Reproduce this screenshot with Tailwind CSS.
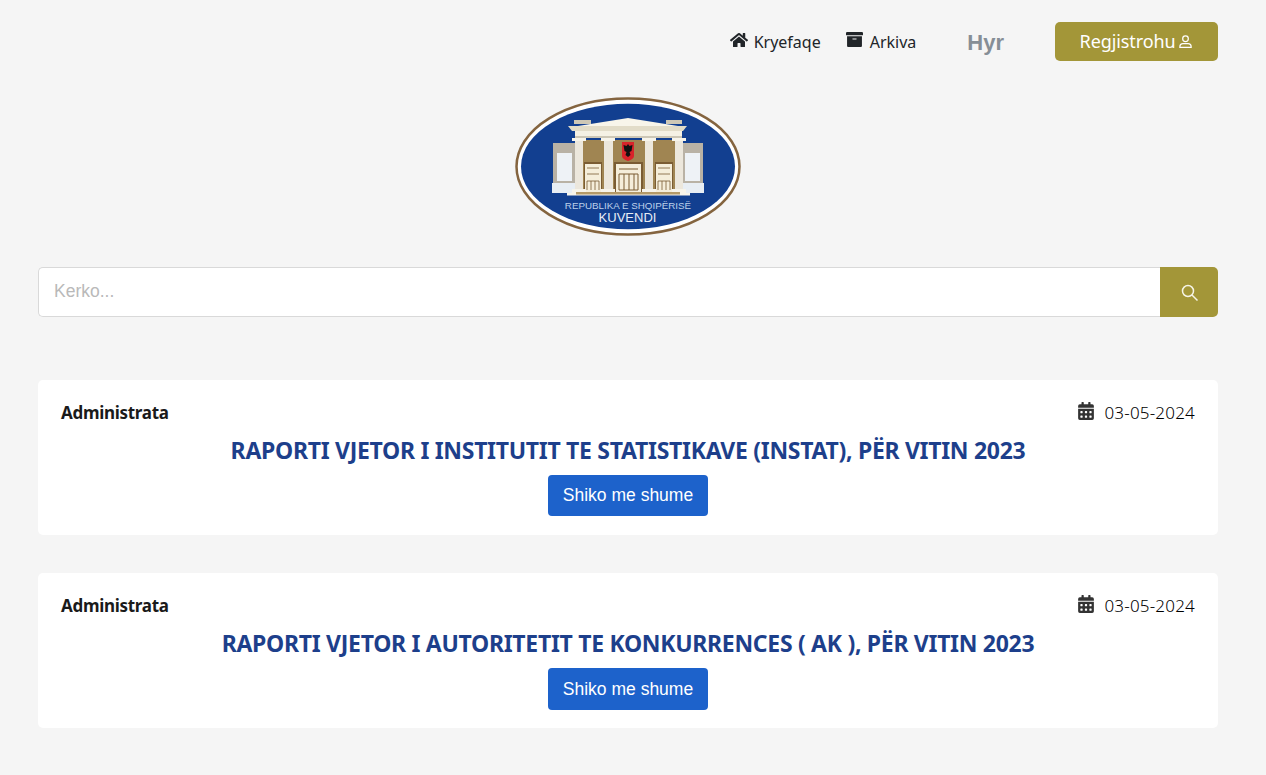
<!DOCTYPE html>
<html lang="en">
<head>
  <meta charset="UTF-8">
  <meta name="viewport" content="width=device-width, initial-scale=1.0">
  <title>Kuvendi</title>
  <script src="https://cdn.jsdelivr.net/npm/@tailwindcss/browser@4"></script>
</head>
<body class="bg-[#f5f5f5] min-h-screen font-['Noto_Sans',sans-serif] text-[#212529]">
  <div class="pl-[38px] pr-[48px]">
    <!-- top nav -->
    <nav class="flex justify-end items-center pt-[22px] h-[61px]">
      <a class="flex items-center text-[16px] text-[#212529]">
        <svg class="w-[18px] h-[16px] mr-[6px] -mt-[4px]" viewBox="0 0 576 512" fill="#212529"><path d="M280.4 148.3 96 300.1V464a16 16 0 0 0 16 16l112-.3a16 16 0 0 0 16-16V368a16 16 0 0 1 16-16h64a16 16 0 0 1 16 16v95.600a16 16 0 0 0 16 16.100l112 .3a16 16 0 0 0 16-16V300L295.700 148.300a12.200 12.200 0 0 0-15.300 0zM571.600 251.500 488 182.600V44a12 12 0 0 0-12-12h-56a12 12 0 0 0-12 12v72.600L318.500 43a48 48 0 0 0-61 0L4.300 251.500a12 12 0 0 0-1.600 16.900l25.500 31a12 12 0 0 0 16.900 1.600L280.400 107a12.200 12.200 0 0 1 15.300 0L531 300.900a12 12 0 0 0 16.900-1.600l25.500-31a12 12 0 0 0-1.800-16.800z"/></svg>
        Kryefaqe
      </a>
      <a class="flex items-center ml-[25px] text-[16px] text-[#212529]">
        <svg class="w-[17px] h-[17px] mr-[7px] -mt-[4px]" viewBox="0 0 512 512" fill="#212529"><path d="M32 448a32 32 0 0 0 32 32h384a32 32 0 0 0 32-32V160H32zm160-212a12 12 0 0 1 12-12h104a12 12 0 0 1 12 12v8a12 12 0 0 1-12 12H204a12 12 0 0 1-12-12zM480 32H32A32 32 0 0 0 0 64v48a16 16 0 0 0 16 16h480a16 16 0 0 0 16-16V64a32 32 0 0 0-32-32z"/></svg>
        Arkiva
      </a>
      <a class="ml-[51px] mt-[2px] text-[22px] leading-none font-bold text-[#868e96] font-['Liberation_Sans',sans-serif]">Hyr</a>
      <button class="ml-[51px] w-[163px] h-[39px] flex items-center justify-center rounded-[5px] bg-[#a39638] text-white text-[18px] tracking-[-0.1px]">
        Regjistrohu
        <svg class="w-[15px] h-[15px] ml-[3px]" viewBox="0 0 24 24" fill="none" stroke="#fff" stroke-width="2"><circle cx="12" cy="7.500" r="4.500"/><path d="M3 20.500c0-3 2-5 5-5h8c3 0 5 2 5 5v1H3z"/></svg>
      </button>
    </nav>

    <!-- logo -->
    <div class="flex justify-center mt-[36px]">
      <svg class="w-[226px] h-[140px]" viewBox="0 0 226 140">
        <ellipse cx="113" cy="69.500" rx="111.500" ry="68" fill="#fff" stroke="#84643f" stroke-width="2.500"/>
        <ellipse cx="113" cy="69.500" rx="107" ry="62.700" fill="#123f90"/>
        <!-- side wings -->
        <rect x="38" y="46" width="24" height="42" fill="#b9b2a5"/>
        <rect x="165" y="46" width="23" height="42" fill="#b9b2a5"/>
        <rect x="42" y="56" width="15" height="28" fill="#eef2f6"/>
        <rect x="170" y="56" width="15" height="28" fill="#eef2f6"/>
        <rect x="37" y="86" width="25" height="10" fill="#e8eef4"/>
        <rect x="165" y="86" width="24" height="10" fill="#e8eef4"/>
        <!-- back wall -->
        <rect x="67" y="43" width="93" height="52" fill="#a08552"/>
        <!-- doors -->
        <rect x="69" y="65" width="18" height="30" fill="#7a5c33"/>
        <rect x="70" y="67" width="16" height="28" fill="#f5eeda"/>
        <path d="M72 71h12M72 77h12M72 84h12M72 93V84M76 93V84M80 93V84M84 93V84" stroke="#7a5c33" stroke-width=".8"/>
        <rect x="140" y="65" width="18" height="30" fill="#7a5c33"/>
        <rect x="141" y="67" width="16" height="28" fill="#f5eeda"/>
        <path d="M143 71h12M143 77h12M143 84h12M143 93V84M147 93V84M151 93V84M155 93V84" stroke="#7a5c33" stroke-width=".8"/>
        <rect x="99" y="65" width="29" height="30" fill="#7a5c33"/>
        <rect x="101" y="67" width="25" height="28" fill="#f5eeda"/>
        <path d="M104 72h19M104 77h19M104 93V77M109 93V77M114 93V77M119 93V77M123 93V77M104 93h19" stroke="#7a5c33" stroke-width="1"/>
        <!-- flag shield -->
        <path d="M107 45h12v14q0 3-6 5-6-2-6-5z" fill="#d8242a"/>
        <path d="M113 47l1.500 2 3-1-1 6-2 1 1 3-2.500 2-2.500-2 1-3-2-1-1-6 3 1z" fill="#111"/>
        <!-- columns -->
        <g fill="#ece7dc">
          <rect x="60" y="44" width="8" height="50"/>
          <rect x="89" y="44" width="9" height="50"/>
          <rect x="130" y="44" width="8" height="50"/>
          <rect x="160" y="44" width="8" height="50"/>
        </g>
        <g fill="#f7f4ea">
          <rect x="57" y="41" width="14" height="3"/>
          <rect x="86" y="41" width="14" height="3"/>
          <rect x="127" y="41" width="14" height="3"/>
          <rect x="157" y="41" width="14" height="3"/>
          <rect x="57" y="92" width="14" height="4"/>
          <rect x="86" y="92" width="14" height="4"/>
          <rect x="127" y="92" width="14" height="4"/>
          <rect x="157" y="92" width="14" height="4"/>
          <rect x="52" y="96" width="123" height="2.500"/>
        </g>
        <rect x="61" y="95" width="104" height="2.500" fill="#b49a68"/>
        <!-- pediment -->
        <rect x="59" y="23" width="17" height="4" fill="#cdc7b6"/>
        <rect x="151" y="23" width="16" height="4" fill="#cdc7b6"/>
        <path d="M113 21 163 29H63z" fill="#f8f5ea"/>
        <path d="M53 29H172L168 34H57z" fill="#e2dcc8"/>
        <rect x="60" y="34" width="107" height="7" fill="#f5f1e4"/>
        <rect x="60" y="39" width="107" height="2" fill="#cdc7b6"/>
        <!-- caption -->
        <text x="113" y="112" text-anchor="middle" fill="#bcd0ea" font-family="Liberation Sans, sans-serif" font-size="9.800">REPUBLIKA E SHQIPËRISË</text>
        <text x="112.500" y="125" text-anchor="middle" fill="#e6edf6" font-family="Liberation Sans, sans-serif" font-size="13">KUVENDI</text>
      </svg>
    </div>

    <!-- search -->
    <div class="flex mt-[30px] h-[50px]">
      <input type="text" placeholder="Kerko..." class="flex-1 bg-white border border-[#d9d9d9] border-r-0 rounded-l-[5px] px-[15px] pb-[2px] text-[17.500px] font-['Liberation_Sans',sans-serif] outline-none placeholder:text-[#b9b9b9]">
      <button class="w-[58px] flex items-center justify-center rounded-r-[5px] bg-[#a39638]">
        <svg class="w-[17px] h-[17px]" viewBox="0 0 17 17" fill="none" stroke="#f6f4e6" stroke-width="1.500"><circle cx="7" cy="7" r="5.500"/><path d="M11 11l5.500 5.500"/></svg>
      </button>
    </div>

    <!-- posts -->
    <div class="mt-[63px] flex flex-col gap-[38px]">
      <article class="bg-white rounded-[5px] h-[155px] px-[23px] pt-[20px] flex flex-col items-center">
        <div class="w-full flex justify-between items-center h-[26px]">
          <span class="font-bold text-[17px] tracking-[-0.3px] text-[#1a1a1a]">Administrata</span>
          <span class="flex items-center text-[17px] font-light tracking-[0.2px] text-black">
            <svg class="w-[16px] h-[18px] ml-[1px] mr-[10px] -mt-[4px]" viewBox="0 0 448 512" fill="#333"><path d="M0 464a48 48 0 0 0 48 48h352a48 48 0 0 0 48-48V192H0zm320-196a12 12 0 0 1 12-12h40a12 12 0 0 1 12 12v40a12 12 0 0 1-12 12h-40a12 12 0 0 1-12-12zm0 128a12 12 0 0 1 12-12h40a12 12 0 0 1 12 12v40a12 12 0 0 1-12 12h-40a12 12 0 0 1-12-12zM192 268a12 12 0 0 1 12-12h40a12 12 0 0 1 12 12v40a12 12 0 0 1-12 12h-40a12 12 0 0 1-12-12zm0 128a12 12 0 0 1 12-12h40a12 12 0 0 1 12 12v40a12 12 0 0 1-12 12h-40a12 12 0 0 1-12-12zM64 268a12 12 0 0 1 12-12h40a12 12 0 0 1 12 12v40a12 12 0 0 1-12 12H76a12 12 0 0 1-12-12zm0 128a12 12 0 0 1 12-12h40a12 12 0 0 1 12 12v40a12 12 0 0 1-12 12H76a12 12 0 0 1-12-12zM400 64h-48V16a16 16 0 0 0-16-16h-32a16 16 0 0 0-16 16v48H160V16a16 16 0 0 0-16-16h-32a16 16 0 0 0-16 16v48H48A48 48 0 0 0 0 112v48h448v-48a48 48 0 0 0-48-48z"/></svg>
            03-05-2024
          </span>
        </div>
        <h2 class="mt-[8px] h-[32px] leading-[32px] text-[23px] font-bold text-[#1d3f8b] tracking-[-0.3px]">RAPORTI VJETOR I INSTITUTIT TE STATISTIKAVE (INSTAT), PËR VITIN 2023</h2>
        <button class="mt-[9px] w-[160px] h-[41px] rounded-[4px] bg-[#1d62cb] text-white text-[17.500px] font-['Liberation_Sans',sans-serif]">Shiko me shume</button>
      </article>

      <article class="bg-white rounded-[5px] h-[155px] px-[23px] pt-[20px] flex flex-col items-center">
        <div class="w-full flex justify-between items-center h-[26px]">
          <span class="font-bold text-[17px] tracking-[-0.3px] text-[#1a1a1a]">Administrata</span>
          <span class="flex items-center text-[17px] font-light tracking-[0.2px] text-black">
            <svg class="w-[16px] h-[18px] ml-[1px] mr-[10px] -mt-[4px]" viewBox="0 0 448 512" fill="#333"><path d="M0 464a48 48 0 0 0 48 48h352a48 48 0 0 0 48-48V192H0zm320-196a12 12 0 0 1 12-12h40a12 12 0 0 1 12 12v40a12 12 0 0 1-12 12h-40a12 12 0 0 1-12-12zm0 128a12 12 0 0 1 12-12h40a12 12 0 0 1 12 12v40a12 12 0 0 1-12 12h-40a12 12 0 0 1-12-12zM192 268a12 12 0 0 1 12-12h40a12 12 0 0 1 12 12v40a12 12 0 0 1-12 12h-40a12 12 0 0 1-12-12zm0 128a12 12 0 0 1 12-12h40a12 12 0 0 1 12 12v40a12 12 0 0 1-12 12h-40a12 12 0 0 1-12-12zM64 268a12 12 0 0 1 12-12h40a12 12 0 0 1 12 12v40a12 12 0 0 1-12 12H76a12 12 0 0 1-12-12zm0 128a12 12 0 0 1 12-12h40a12 12 0 0 1 12 12v40a12 12 0 0 1-12 12H76a12 12 0 0 1-12-12zM400 64h-48V16a16 16 0 0 0-16-16h-32a16 16 0 0 0-16 16v48H160V16a16 16 0 0 0-16-16h-32a16 16 0 0 0-16 16v48H48A48 48 0 0 0 0 112v48h448v-48a48 48 0 0 0-48-48z"/></svg>
            03-05-2024
          </span>
        </div>
        <h2 class="mt-[8px] h-[32px] leading-[32px] text-[23px] font-bold text-[#1d3f8b] tracking-[-0.3px]">RAPORTI VJETOR I AUTORITETIT TE KONKURRENCES ( AK ), PËR VITIN 2023</h2>
        <button class="mt-[9px] w-[160px] h-[42px] rounded-[4px] bg-[#1d62cb] text-white text-[17.500px] font-['Liberation_Sans',sans-serif]">Shiko me shume</button>
      </article>
    </div>
  </div>
</body>
</html>
